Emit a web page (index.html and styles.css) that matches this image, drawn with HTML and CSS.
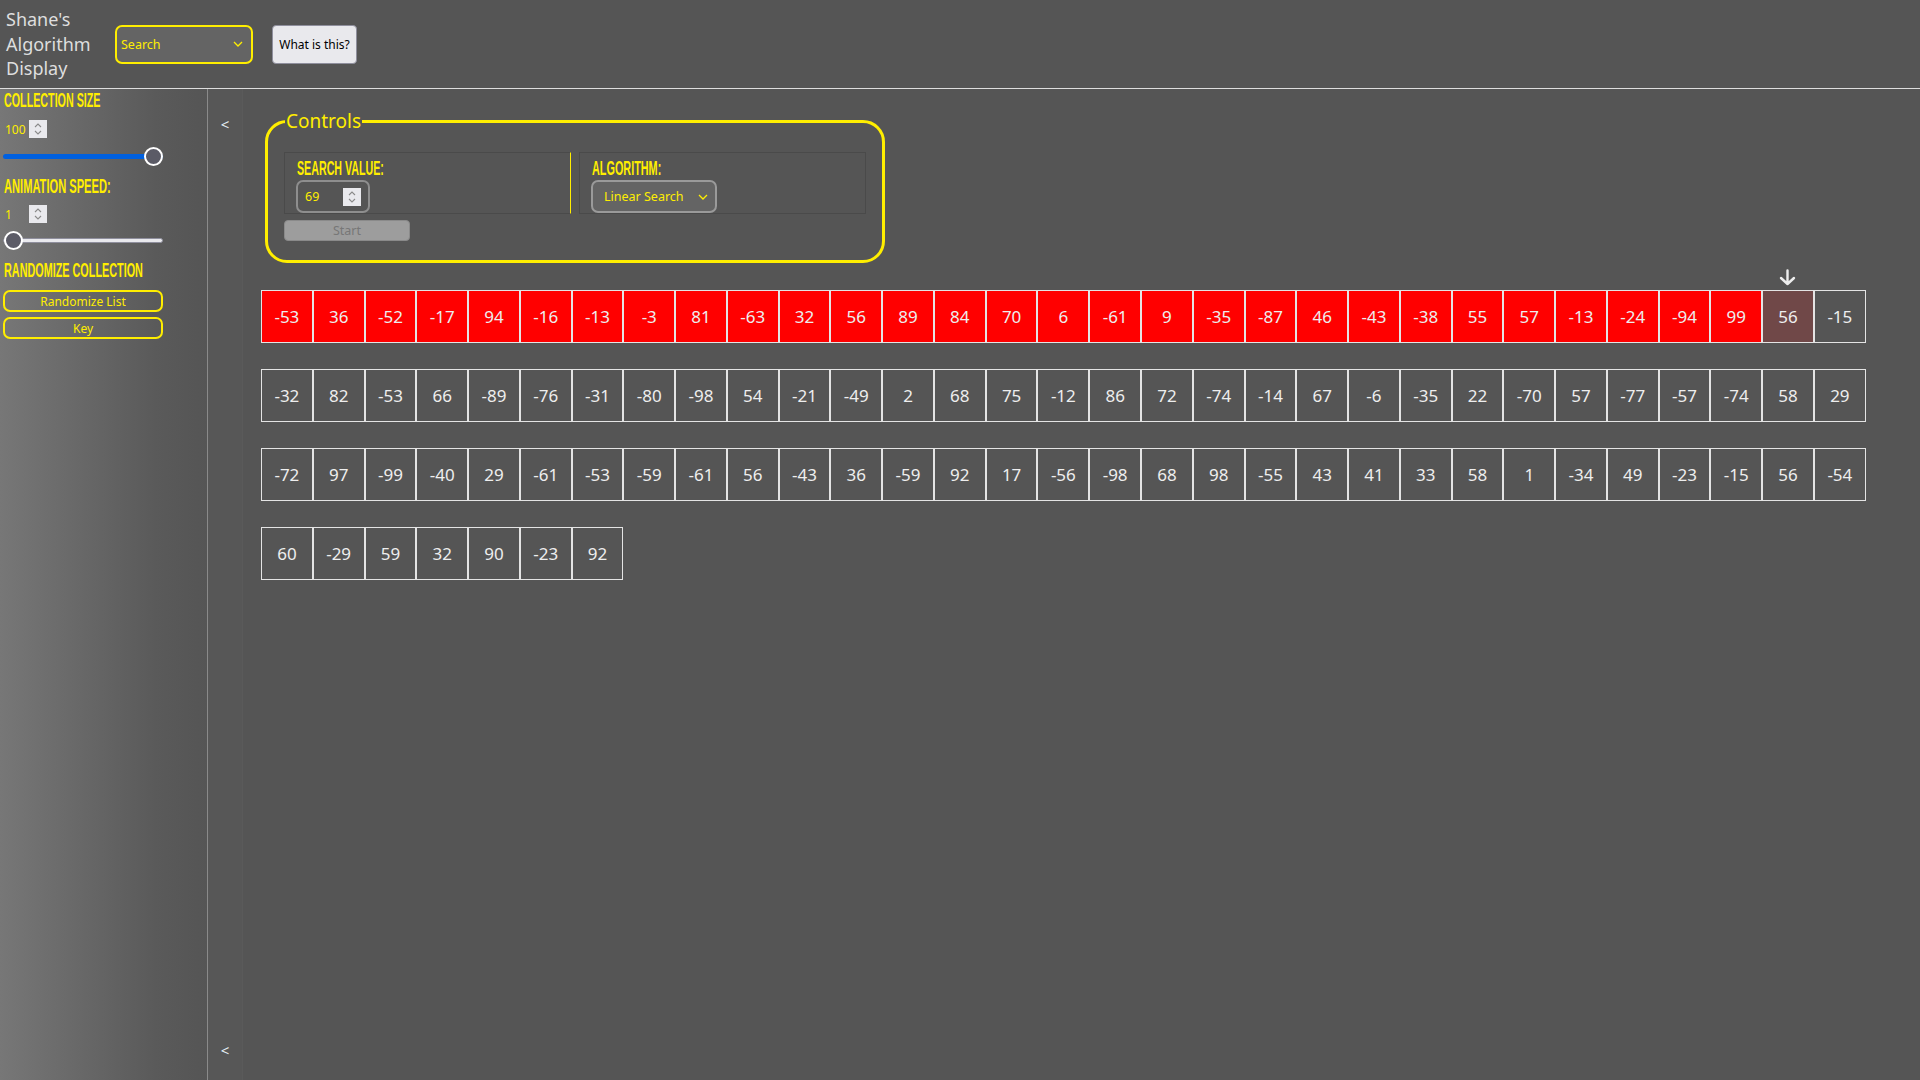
FILE: index.html
```html
<!DOCTYPE html>
<html lang="en">
<head>
<meta charset="utf-8">
<title>Shane's Algorithm Display</title>
<link rel="stylesheet" href="styles.css">
</head>
<body>
<header class="topbar">
  <div class="title">Shane's Algorithm Display</div>
  <div class="select select-yellow select-mode">
    <span>Search</span>
    <svg class="chev" width="10" height="6" viewBox="0 0 10 6"><polyline points="1,1 5,5 9,1" fill="none" stroke="#ffee00" stroke-width="1.3"/></svg>
  </div>
  <button class="btn-help">What is this?</button>
</header>
<div class="layout">
  <aside class="sidebar">
    <div class="heading"><span class="h-text w97">Collection Size</span></div>
    <div class="num-row">
      <span class="num-val">100</span>
      <span class="spinner"><svg width="10" height="14" viewBox="0 0 10 14"><polyline points="2,5 5,2 8,5" fill="none" stroke="#8a8a8a" stroke-width="1.1"/><polyline points="2,9 5,12 8,9" fill="none" stroke="#8a8a8a" stroke-width="1.1"/></svg></span>
    </div>
    <input class="range range-full" type="range" min="1" max="100" value="100">
    <div class="heading h2"><span class="h-text w106">Animation Speed:</span></div>
    <div class="num-row">
      <span class="num-val">1</span>
      <span class="spinner"><svg width="10" height="14" viewBox="0 0 10 14"><polyline points="2,5 5,2 8,5" fill="none" stroke="#8a8a8a" stroke-width="1.1"/><polyline points="2,9 5,12 8,9" fill="none" stroke="#8a8a8a" stroke-width="1.1"/></svg></span>
    </div>
    <input class="range range-empty" type="range" min="1" max="100" value="1">
    <div class="heading h3"><span class="h-text w139">Randomize Collection</span></div>
    <button class="btn-side first">Randomize List</button>
    <button class="btn-side">Key</button>
  </aside>
  <div class="toggle-col">
    <span class="toggle">&lt;</span>
    <span class="toggle">&lt;</span>
  </div>
  <main class="main">
    <fieldset class="controls">
      <legend>Controls</legend>
      <div class="ctrl-row">
        <div class="ctrl-cell cell-left">
          <div class="heading"><span class="h-text w87">Search Value:</span></div>
          <div class="num-box">
            <span class="num-val">69</span>
            <span class="spinner"><svg width="10" height="14" viewBox="0 0 10 14"><polyline points="2,5 5,2 8,5" fill="none" stroke="#8a8a8a" stroke-width="1.1"/><polyline points="2,9 5,12 8,9" fill="none" stroke="#8a8a8a" stroke-width="1.1"/></svg></span>
          </div>
        </div>
        <div class="ctrl-cell cell-right">
          <div class="heading"><span class="h-text w69">Algorithm:</span></div>
          <div class="select select-gray">
            <span>Linear Search</span>
            <svg class="chev" width="10" height="6" viewBox="0 0 10 6"><polyline points="1,1 5,5 9,1" fill="none" stroke="#ffee00" stroke-width="1.3"/></svg>
          </div>
        </div>
      </div>
      <button class="btn-start" disabled>Start</button>
    </fieldset>

    <div class="array" id="array"></div>
  </main>
</div>
<script>
  var data = [-53,36,-52,-17,94,-16,-13,-3,81,-63,32,56,89,84,70,6,-61,9,-35,-87,46,-43,-38,55,57,-13,-24,-94,99,56,-15,
  -32,82,-53,66,-89,-76,-31,-80,-98,54,-21,-49,2,68,75,-12,86,72,-74,-14,67,-6,-35,22,-70,57,-77,-57,-74,58,29,
  -72,97,-99,-40,29,-61,-53,-59,-61,56,-43,36,-59,92,17,-56,-98,68,98,-55,43,41,33,58,1,-34,49,-23,-15,56,-54,
  60,-29,59,32,90,-23,92];
  var arr = document.getElementById('array');
  data.forEach(function (v, i) {
    var c = document.createElement('div');
    c.className = 'cell' + (i < 29 ? ' checked' : '') + (i === 29 ? ' current' : '');
    c.textContent = v;
    if (i === 29) {
      var a = document.createElement('span');
      a.className = 'pointer';
      a.innerHTML = '<svg width="17" height="17" viewBox="0 0 17 17"><path d="M8.5 1.5 V15 M2 9 L8.5 15 L15 9" fill="none" stroke="#eeeeee" stroke-width="2.4" stroke-linecap="round" stroke-linejoin="round"/></svg>';
      c.appendChild(a);
    }
    arr.appendChild(c);
  });
</script>
</body>
</html>
```
FILE: styles.css
```css
* { box-sizing: border-box; }
html, body { margin: 0; padding: 0; }
body {
  background: #555555;
  font-family: "Noto Sans", "Open Sans", "DejaVu Sans", sans-serif;
  color: #e6e6e6;
  width: 1920px;
  height: 1080px;
  overflow: hidden;
}

/* header */
.topbar {
  height: 89px;
  border-bottom: 1px solid #dedede;
  display: flex;
  align-items: center;
  padding-left: 6px;
}
.title {
  width: 92px;
  font-size: 18px;
  line-height: 24.5px;
  color: #dedede;
  margin-top: 0;
  margin-right: 17px;
}
.select {
  display: flex;
  align-items: center;
  justify-content: space-between;
  border-radius: 7px;
  background: #646464;
  color: #ffee00;
  font-size: 12.5px;
}
.select-yellow {
  border: 2px solid #ffee00;
}
.select-mode {
  width: 138px;
  height: 39px;
  padding: 0 8px 0 4px;
  margin-right: 19px;
}
.btn-help {
  width: 85px;
  height: 39px;
  background: #e9e9ed;
  border: 1px solid #8f8f9d;
  border-radius: 4px;
  font-family: inherit;
  font-size: 12px;
  color: #000;
  padding: 0;
}

/* layout */
.layout {
  display: flex;
  height: 991px;
}
.sidebar {
  width: 208px;
  border-right: 1px solid #8a8a8a;
  background: linear-gradient(to right, #777777 0%, #5a5a5a 75%, #555555 100%);
  padding-left: 3px;
  display: flex;
  flex-direction: column;
  align-items: flex-start;
}
.heading {
  height: 20px;
  line-height: 20px;
  margin-top: 1px;
  white-space: nowrap;
}
.h-text {
  display: inline-block;
  font-family: "Liberation Sans Narrow", "Liberation Sans", sans-serif;
  font-weight: bold;
  font-size: 19.5px;
  text-transform: uppercase;
  color: #ffee00;
  transform-origin: left center;
  margin-left: 1px;
}
.w97 { transform: scaleX(0.55); }
.w106 { transform: scaleX(0.57); }
.w139 { transform: scaleX(0.555); }
.w87 { transform: scaleX(0.547); }
.w69 { transform: scaleX(0.556); }
.sidebar .h2 { margin-top: 10px; }
.sidebar .h3 { margin-top: 10px; }

.num-row {
  display: flex;
  align-items: center;
  height: 18px;
  margin-top: 10px;
}
.sidebar .h2 + .num-row { margin-top: 9px; }
.num-val {
  color: #ffee00;
  font-size: 12px;
  width: 26px;
  padding-left: 2px;
}
.spinner {
  width: 18px;
  height: 18px;
  background: #e9e9ed;
  display: flex;
  align-items: center;
  justify-content: center;
}

.range {
  -webkit-appearance: none;
  appearance: none;
  width: 160px;
  height: 19px;
  margin: 9px 0 0 0;
  background: transparent;
  padding: 0;
}
.range-empty { margin-top: 8px; }
.range::-webkit-slider-runnable-track {
  height: 5px;
  border-radius: 3px;
}
.range-full::-webkit-slider-runnable-track {
  background: #0060df;
}
.range-empty::-webkit-slider-runnable-track {
  background: #e9e9ed;
  border: 1px solid #8f8f9d;
}
.range::-webkit-slider-thumb {
  -webkit-appearance: none;
  width: 19px;
  height: 19px;
  border-radius: 50%;
  background: #5b5b66;
  border: 2px solid #ffffff;
  margin-top: -7px;
}
.range-empty::-webkit-slider-thumb { margin-top: -8px; }

.btn-side {
  width: 160px;
  height: 22px;
  background: transparent;
  border: 2px solid #ffee00;
  border-radius: 7px;
  color: #ffee00;
  font-family: inherit;
  font-size: 12px;
  padding: 0;
  margin-top: 5px;
}
.btn-side.first { margin-top: 10px; }

.toggle-col {
  width: 35px;
  border-right: 1px solid #5a5a5a;
  background: #575757;
  display: flex;
  flex-direction: column;
  justify-content: space-between;
  align-items: center;
  padding: 25px 0 20px 0;
}
.toggle {
  font-size: 15px;
  line-height: 20px;
  color: #e6eef6;
}

/* main */
.main {
  flex: 1;
  padding-left: 18px;
  padding-top: 19px;
}
.controls {
  width: 620px;
  margin: 0 0 0 4px;
  border: 3px solid #ffee00;
  border-radius: 22px;
  padding: 18px 15px 19px 16px;
}
.controls legend {
  color: #ffee00;
  font-size: 19px;
  line-height: 26px;
  padding: 0 1px;
  margin-left: 1px;
}
.ctrl-row {
  display: flex;
  gap: 8px;
}
.ctrl-cell {
  border: 1px solid #4a4a4a;
  height: 62px;
  padding: 2px 0 0 11px;
}
.cell-left {
  width: 287px;
  border-right: 1px solid #ffee00;
}
.cell-right {
  width: 287px;
}
.ctrl-cell .heading { margin-top: 3px; }
.num-box {
  width: 74px;
  height: 33px;
  border: 2px solid #8e8e8e;
  border-radius: 7px;
  margin-top: 2px;
  display: flex;
  align-items: center;
  padding-left: 7px;
}
.num-box .num-val {
  width: 38px;
  font-size: 12.5px;
  padding-left: 0;
}
.select-gray {
  width: 126px;
  height: 33px;
  margin-top: 2px;
  border: 2px solid #9a9a9a;
  padding: 0 7px 0 11px;
}
.btn-start {
  display: block;
  width: 126px;
  height: 21px;
  margin-top: 6px;
  background: #9d9d9d;
  border: 1px solid #8a8a8a;
  border-radius: 4px;
  color: #777777;
  font-family: inherit;
  font-size: 12.5px;
  padding: 0;
}

.array {
  width: 1606px;
  display: flex;
  flex-wrap: wrap;
  row-gap: 26px;
  margin-top: 27px;
}
.cell {
  position: relative;
  flex: 0 0 calc(1605px / 31);
  height: 53px;
  border: 1px solid #e4e4e4;
  display: flex;
  align-items: center;
  justify-content: center;
  font-size: 17px;
  color: #eeeeee;
}
.cell.checked { background: #ff0000; }
.cell.current { background: #704848; }
.pointer {
  position: absolute;
  top: -22px;
  left: 50%;
  margin-left: -9px;
  width: 17px;
  height: 17px;
}
.pointer svg { display: block; }
```
